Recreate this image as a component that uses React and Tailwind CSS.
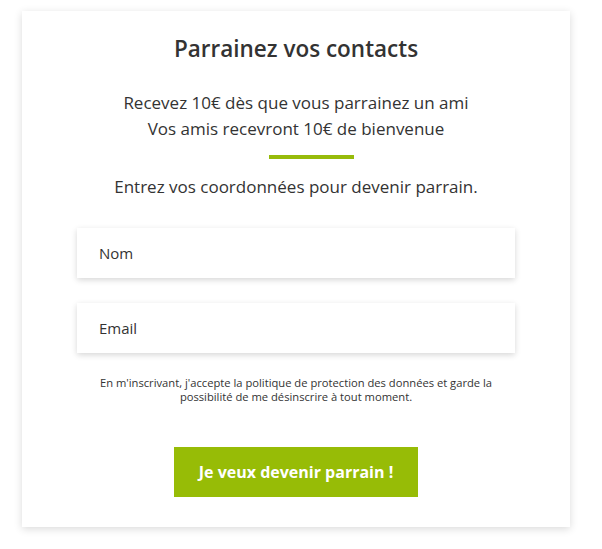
import React from 'react';

const font = { fontFamily: '"Open Sans", Lato, sans-serif' };

export default function App() {
  return (
    <div className="min-h-[549px] w-[602px] bg-white pt-[11px] text-[#333333]" style={font}>
      <div className="ml-[22px] flex w-[548px] flex-col items-center bg-white pt-[23px] pb-[30px] shadow-[0_2px_8px_rgba(0,0,0,0.15)]">
        {/* Header */}
        <h1 className="text-[22.5px] font-semibold leading-[30px]">Parrainez vos contacts</h1>
        <div className="mt-[26px] text-center text-[17px] leading-[26px]">
          <p>Recevez 10€ dès que vous parrainez un ami</p>
          <p>Vos amis recevront 10€ de bienvenue</p>
        </div>
        <div className="mt-[13px] ml-[31px] h-[4px] w-[85px] bg-[#97bb0a]" />
        <p className="mt-[15px] text-[17px] leading-[26px]">Entrez vos coordonnées pour devenir parrain.</p>

        {/* Form */}
        <div className="mt-[28px] flex w-[438px] flex-col gap-[25px]">
          <div className="flex h-[50px] items-center bg-white px-[22px] text-[15px] shadow-[0_2px_6px_rgba(0,0,0,0.16)]">Nom</div>
          <div className="flex h-[50px] items-center bg-white px-[22px] text-[15px] shadow-[0_2px_6px_rgba(0,0,0,0.16)]">Email</div>
        </div>
        <p className="mt-[23px] w-[420px] text-center text-[11.2px] leading-[14px]">
          En m'inscrivant, j'accepte la politique de protection des données et garde la possibilité de me désinscrire à tout moment.
        </p>
        <button className="mt-[43px] h-[50px] w-[244px] bg-[#97bc06] text-[16px] font-bold text-white">
          Je veux devenir parrain !
        </button>
      </div>
    </div>
  );
}
